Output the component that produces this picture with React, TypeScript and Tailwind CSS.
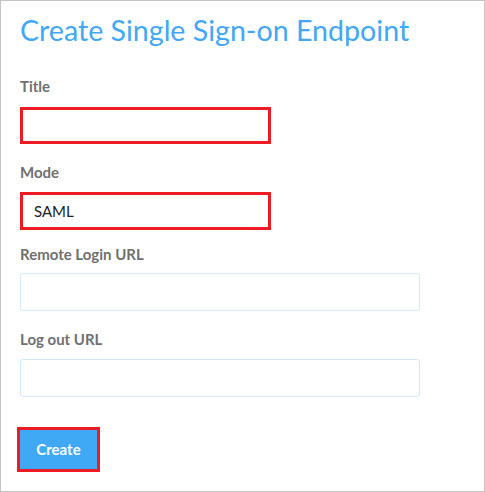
export default function App() {
  return (
    <div className="w-[485px] h-[492px] bg-white border border-[#c4c4c4] pl-[19px] font-['Lato','Open_Sans',sans-serif]">
      <h1 className="mt-[12px] text-[28.6px] leading-[34px] text-[#42a7f5] font-normal">
        Create Single Sign-on Endpoint
      </h1>

      <label className="block mt-[29px] text-[15px] leading-[20px] font-bold text-[#707070]">Title</label>
      <div className="mt-[11px] w-[251px] h-[37px] border-[3px] border-[#ed1c24] bg-white" />

      <label className="block mt-[18px] text-[15px] leading-[20px] font-bold text-[#707070]">Mode</label>
      <div className="mt-[10px] w-[251px] h-[38px] border-[3px] border-[#ed1c24] bg-white pl-[11px] flex items-center text-[15px] text-[#222]">
        SAML
      </div>

      <label className="block mt-[14px] text-[15px] leading-[20px] font-bold text-[#707070]">Remote Login URL</label>
      <div className="mt-[9px] w-[400px] h-[38px] rounded-[3px] border border-[#d5e8f8] bg-white" />

      <label className="block mt-[18px] text-[15px] leading-[20px] font-bold text-[#707070]">Log out URL</label>
      <div className="mt-[10px] w-[400px] h-[38px] rounded-[3px] border border-[#d5e8f8] bg-white" />

      <div className="mt-[30px] -ml-[3px] w-[83px] h-[45px] border-[3px] border-[#ed1c24] flex">
        <button className="flex-1 bg-[#3fa9f5] text-white text-[15px] font-bold">Create</button>
      </div>
    </div>
  )
}
